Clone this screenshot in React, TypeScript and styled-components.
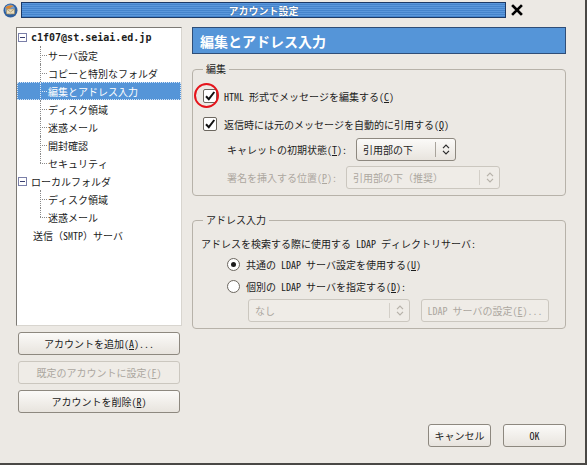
import React from 'react';
import styled, { createGlobalStyle } from 'styled-components';

const jp = `"Noto Sans Mono CJK JP", "Noto Sans CJK JP", sans-serif`;

const Global = createGlobalStyle`
  * { box-sizing: border-box; }
  body {
    margin: 0;
    background: #ece9e4;
    font-family: ${jp};
    font-size: 10px;
    color: #1c1c1c;
  }
`;

const Window = styled.div`
  width: 587px;
  height: 465px;
  background: #ece9e4;
  border-right: 2px solid #4a4845;
  border-bottom: 2px solid #4a4845;
  display: flex;
  flex-direction: column;
`;

const TitleBar = styled.div`
  height: 20px;
  display: flex;
  align-items: center;
  padding: 0 3px;
  gap: 3px;
`;

const TitleStrip = styled.div`
  width: 485px;
  height: 16px;
  border: 1px solid #1d3a66;
  background: repeating-linear-gradient(180deg, #5b98dc 0, #5b98dc 1px, #4584cc 1px, #4584cc 2px);
  color: #fff;
  font-weight: bold;
  font-size: 10px;
  display: flex;
  align-items: center;
  justify-content: center;
  text-shadow: 0 0 1px #1d3a66;
`;

const CloseBox = styled.div`
  width: 16px;
  height: 16px;
  display: flex;
  align-items: center;
  justify-content: center;
`;

const Body = styled.div`
  flex: 1;
  display: flex;
  flex-direction: column;
  padding: 7px 19px 0 16px;
`;

const Main = styled.div`
  display: flex;
  gap: 10px;
  height: 386px;
`;

const LeftCol = styled.div`
  width: 166px;
  display: flex;
  flex-direction: column;
  align-items: center;
`;

const Tree = styled.div`
  width: 166px;
  height: 300px;
  background: #fff;
  border: 1px solid #7d7a75;
  border-right-color: #d8d5cf;
  border-bottom-color: #d8d5cf;
  margin-bottom: 6px;
`;

const TreeRow = styled.div<{ $indent: number; $selected?: boolean; $child?: boolean; $last?: boolean }>`
  position: relative;
  height: 18px;
  display: flex;
  align-items: center;
  gap: 4px;
  padding-left: ${p => p.$indent}px;
  background: ${p => (p.$selected ? '#5595d8' : 'transparent')};
  color: ${p => (p.$selected ? '#fff' : '#1c1c1c')};
  outline: ${p => (p.$selected ? '1px dotted #d6e5f6' : 'none')};
  outline-offset: -1px;
  white-space: nowrap;
  ${p =>
    p.$child &&
    `
    &::before {
      content: '';
      position: absolute;
      left: 23px;
      top: 9px;
      width: 7px;
      border-top: 1px dotted ${p.$selected ? '#dfe9f5' : '#8a8a8a'};
    }
    &::after {
      content: '';
      position: absolute;
      left: 23px;
      top: 0;
      height: ${p.$last ? '9px' : '18px'};
      border-left: 1px dotted ${p.$selected ? '#dfe9f5' : '#8a8a8a'};
    }
  `}
`;

const Expander = styled.span`
  width: 9px;
  height: 9px;
  border: 1px solid #7a7fa8;
  background: #fff;
  position: relative;
  flex: none;
  &::after {
    content: '';
    position: absolute;
    left: 1px;
    right: 1px;
    top: 3px;
    border-top: 1px solid #3a3f70;
  }
`;

const Email = styled.span`
  font-family: "DejaVu Sans Mono", monospace;
  font-size: 10px;
  font-weight: bold;
`;

const Button = styled.button<{ $w: number }>`
  width: ${p => p.$w}px;
  height: 23px;
  border: 1px solid #8d887f;
  border-radius: 3px;
  background: linear-gradient(180deg, #fbfaf8, #e8e4de);
  font-family: ${jp};
  font-size: 10px;
  color: #1c1c1c;
  padding: 0;
  flex: none;
  &:disabled {
    color: #aca79f;
    border-color: #cbc7bf;
    background: #efece7;
  }
`;

const LeftButtons = styled.div`
  display: flex;
  flex-direction: column;
  gap: 6px;
`;

const RightCol = styled.div`
  width: 375px;
  display: flex;
  flex-direction: column;
`;

const Header = styled.div`
  height: 27px;
  background: #5595d8;
  border: 1px solid #2f4e78;
  color: #fff;
  font-weight: bold;
  font-size: 14px;
  display: flex;
  align-items: center;
  padding-left: 7px;
`;

const Group = styled.fieldset<{ $mt: number; $h: number; $pt: number }>`
  margin: ${p => p.$mt}px 0 0 0;
  height: ${p => p.$h}px;
  border: 1px solid #b7b2a9;
  border-radius: 4px;
  padding: ${p => p.$pt}px 8px 0 8px;
  min-width: 0;
  display: flex;
  flex-direction: column;
`;

const Legend = styled.legend`
  padding: 0 3px;
  margin-left: 2px;
  font-size: 10px;
  line-height: 12px;
`;

const CheckRow = styled.div<{ $mt?: number }>`
  position: relative;
  height: 22px;
  margin-top: ${p => p.$mt || 0}px;
  display: flex;
  align-items: center;
  gap: 7px;
  padding-left: 2px;
`;

const Box = styled.span`
  width: 14px;
  height: 14px;
  border: 1px solid #6c675f;
  background: #fff;
  border-radius: 2px;
  display: flex;
  align-items: center;
  justify-content: center;
  flex: none;
`;

const RedRing = styled.span`
  position: absolute;
  left: -7px;
  top: -2px;
  width: 25px;
  height: 25px;
  border: 2px solid #e5141b;
  border-radius: 50%;
`;

const FieldRow = styled.div<{ $mt: number; $disabled?: boolean }>`
  height: 23px;
  margin-top: ${p => p.$mt}px;
  display: flex;
  align-items: center;
  gap: 9px;
  padding-left: 26px;
  color: ${p => (p.$disabled ? '#aca79f' : '#1c1c1c')};
`;

const Combo = styled.div<{ $w: number; $disabled?: boolean }>`
  width: ${p => p.$w}px;
  height: 23px;
  border: 1px solid ${p => (p.$disabled ? '#cbc7bf' : '#8d887f')};
  border-radius: 3px;
  background: ${p => (p.$disabled ? '#efece7' : 'linear-gradient(180deg, #fbfaf8, #e8e4de)')};
  color: ${p => (p.$disabled ? '#aca79f' : '#1c1c1c')};
  display: flex;
  align-items: center;
  flex: none;
`;

const ComboText = styled.span`
  flex: 1;
  padding-left: 6px;
  white-space: nowrap;
`;

const ComboSep = styled.span<{ $disabled?: boolean }>`
  width: 1px;
  height: 15px;
  background: ${p => (p.$disabled ? '#d3cfc8' : '#a9a49c')};
`;

const ComboArrow = styled.span`
  width: 19px;
  display: flex;
  justify-content: center;
`;

const Description = styled.div`
  height: 20px;
  display: flex;
  align-items: center;
  margin-top: 2px;
`;

const RadioRow = styled.div<{ $mt: number }>`
  height: 20px;
  margin-top: ${p => p.$mt}px;
  display: flex;
  align-items: center;
  gap: 6px;
  padding-left: 26px;
`;

const Radio = styled.span<{ $on?: boolean }>`
  width: 13px;
  height: 13px;
  border: 1px solid #6c675f;
  border-radius: 50%;
  background: #fff;
  display: flex;
  align-items: center;
  justify-content: center;
  &::after {
    content: '';
    width: 5px;
    height: 5px;
    border-radius: 50%;
    background: ${p => (p.$on ? '#1c1c1c' : 'transparent')};
  }
`;

const LdapRow = styled.div`
  display: flex;
  align-items: center;
  gap: 11px;
  padding-left: 47px;
  margin-top: 3px;
`;

const Footer = styled.div`
  display: flex;
  justify-content: flex-end;
  gap: 12px;
  margin-top: 11px;
`;

const Arrows = ({ disabled }: { disabled?: boolean }) => (
  <svg width="8" height="11" viewBox="0 0 8 11" fill="none" stroke={disabled ? '#b6b1a9' : '#2a2a2a'} strokeWidth="1.2">
    <path d="M1 4.2 L4 1.2 L7 4.2" />
    <path d="M1 6.8 L4 9.8 L7 6.8" />
  </svg>
);

const Check = () => (
  <svg width="12" height="12" viewBox="0 0 12 12" fill="none" stroke="#111" strokeWidth="2">
    <path d="M2 6.2 L4.8 9.2 L10.3 2" />
  </svg>
);

const AppIcon = () => (
  <svg width="15" height="15" viewBox="0 0 15 15">
    <circle cx="7.5" cy="7.5" r="7" fill="#2f5f9e" />
    <circle cx="7" cy="6.5" r="5" fill="#6f9fd6" />
    <path d="M3.5 6 L11.5 6 L11.5 11 L3.5 11 Z" fill="#e8dcc0" stroke="#9a8450" strokeWidth="0.6" />
    <path d="M3.5 6 L7.5 9 L11.5 6" fill="none" stroke="#9a8450" strokeWidth="0.6" />
    <path d="M2 5 Q5 1 11 3 Q8 4 6 6 Z" fill="#e0862a" />
  </svg>
);

const CloseIcon = () => (
  <svg width="12" height="12" viewBox="0 0 12 12" stroke="#000" strokeWidth="2.6" strokeLinecap="square">
    <path d="M2 2 L10 10 M10 2 L2 10" />
  </svg>
);

const children1 = ['サーバ設定', 'コピーと特別なフォルダ', '編集とアドレス入力', 'ディスク領域', '迷惑メール', '開封確認', 'セキュリティ'];
const children2 = ['ディスク領域', '迷惑メール'];

export default function App() {
  return (
    <>
      <Global />
      <Window>
        <TitleBar>
          <AppIcon />
          <TitleStrip>アカウント設定</TitleStrip>
          <CloseBox>
            <CloseIcon />
          </CloseBox>
        </TitleBar>
        <Body>
          <Main>
            <LeftCol>
              <Tree>
                <TreeRow $indent={1}>
                  <Expander />
                  <Email>c1f07@st.seiai.ed.jp</Email>
                </TreeRow>
                {children1.map((label, i) => (
                  <TreeRow key={label} $indent={31} $child $last={i === children1.length - 1} $selected={i === 2}>
                    {label}
                  </TreeRow>
                ))}
                <TreeRow $indent={1}>
                  <Expander />
                  ローカルフォルダ
                </TreeRow>
                {children2.map((label, i) => (
                  <TreeRow key={label} $indent={31} $child $last={i === children2.length - 1}>
                    {label}
                  </TreeRow>
                ))}
                <TreeRow $indent={16}>送信（SMTP）サーバ</TreeRow>
              </Tree>
              <LeftButtons>
                <Button $w={162}>
                  アカウントを追加(<u>A</u>)...
                </Button>
                <Button $w={162} disabled>
                  既定のアカウントに設定(<u>F</u>)
                </Button>
                <Button $w={162}>
                  アカウントを削除(<u>R</u>)
                </Button>
              </LeftButtons>
            </LeftCol>
            <RightCol>
              <Header>編集とアドレス入力</Header>
              <Group $mt={9} $h={133} $pt={10}>
                <Legend>編集</Legend>
                <CheckRow>
                  <Box>
                    <Check />
                  </Box>
                  <RedRing />
                  <span>
                    HTML 形式でメッセージを編集する(<u>C</u>)
                  </span>
                </CheckRow>
                <CheckRow $mt={6}>
                  <Box>
                    <Check />
                  </Box>
                  <span>
                    返信時には元のメッセージを自動的に引用する(<u>Q</u>)
                  </span>
                </CheckRow>
                <FieldRow $mt={3}>
                  <span>
                    キャレットの初期状態(<u>T</u>):
                  </span>
                  <Combo $w={100}>
                    <ComboText>引用部の下</ComboText>
                    <ComboSep />
                    <ComboArrow>
                      <Arrows />
                    </ComboArrow>
                  </Combo>
                </FieldRow>
                <FieldRow $mt={5} $disabled>
                  <span>
                    署名を挿入する位置(<u>P</u>):
                  </span>
                  <Combo $w={154} $disabled>
                    <ComboText>引用部の下（推奨）</ComboText>
                    <ComboSep $disabled />
                    <ComboArrow>
                      <Arrows disabled />
                    </ComboArrow>
                  </Combo>
                </FieldRow>
              </Group>
              <Group $mt={18} $h={115} $pt={5}>
                <Legend>アドレス入力</Legend>
                <Description>アドレスを検索する際に使用する LDAP ディレクトリサーバ:</Description>
                <RadioRow $mt={1}>
                  <Radio $on />
                  <span>
                    共通の LDAP サーバ設定を使用する(<u>U</u>)
                  </span>
                </RadioRow>
                <RadioRow $mt={2}>
                  <Radio />
                  <span>
                    個別の LDAP サーバを指定する(<u>D</u>):
                  </span>
                </RadioRow>
                <LdapRow>
                  <Combo $w={162} $disabled>
                    <ComboText>なし</ComboText>
                    <ComboSep $disabled />
                    <ComboArrow>
                      <Arrows disabled />
                    </ComboArrow>
                  </Combo>
                  <Button $w={128} disabled>
                    LDAP サーバの設定(<u>E</u>)...
                  </Button>
                </LdapRow>
              </Group>
            </RightCol>
          </Main>
          <Footer>
            <Button $w={63}>キャンセル</Button>
            <Button $w={63}>OK</Button>
          </Footer>
        </Body>
      </Window>
    </>
  );
}
